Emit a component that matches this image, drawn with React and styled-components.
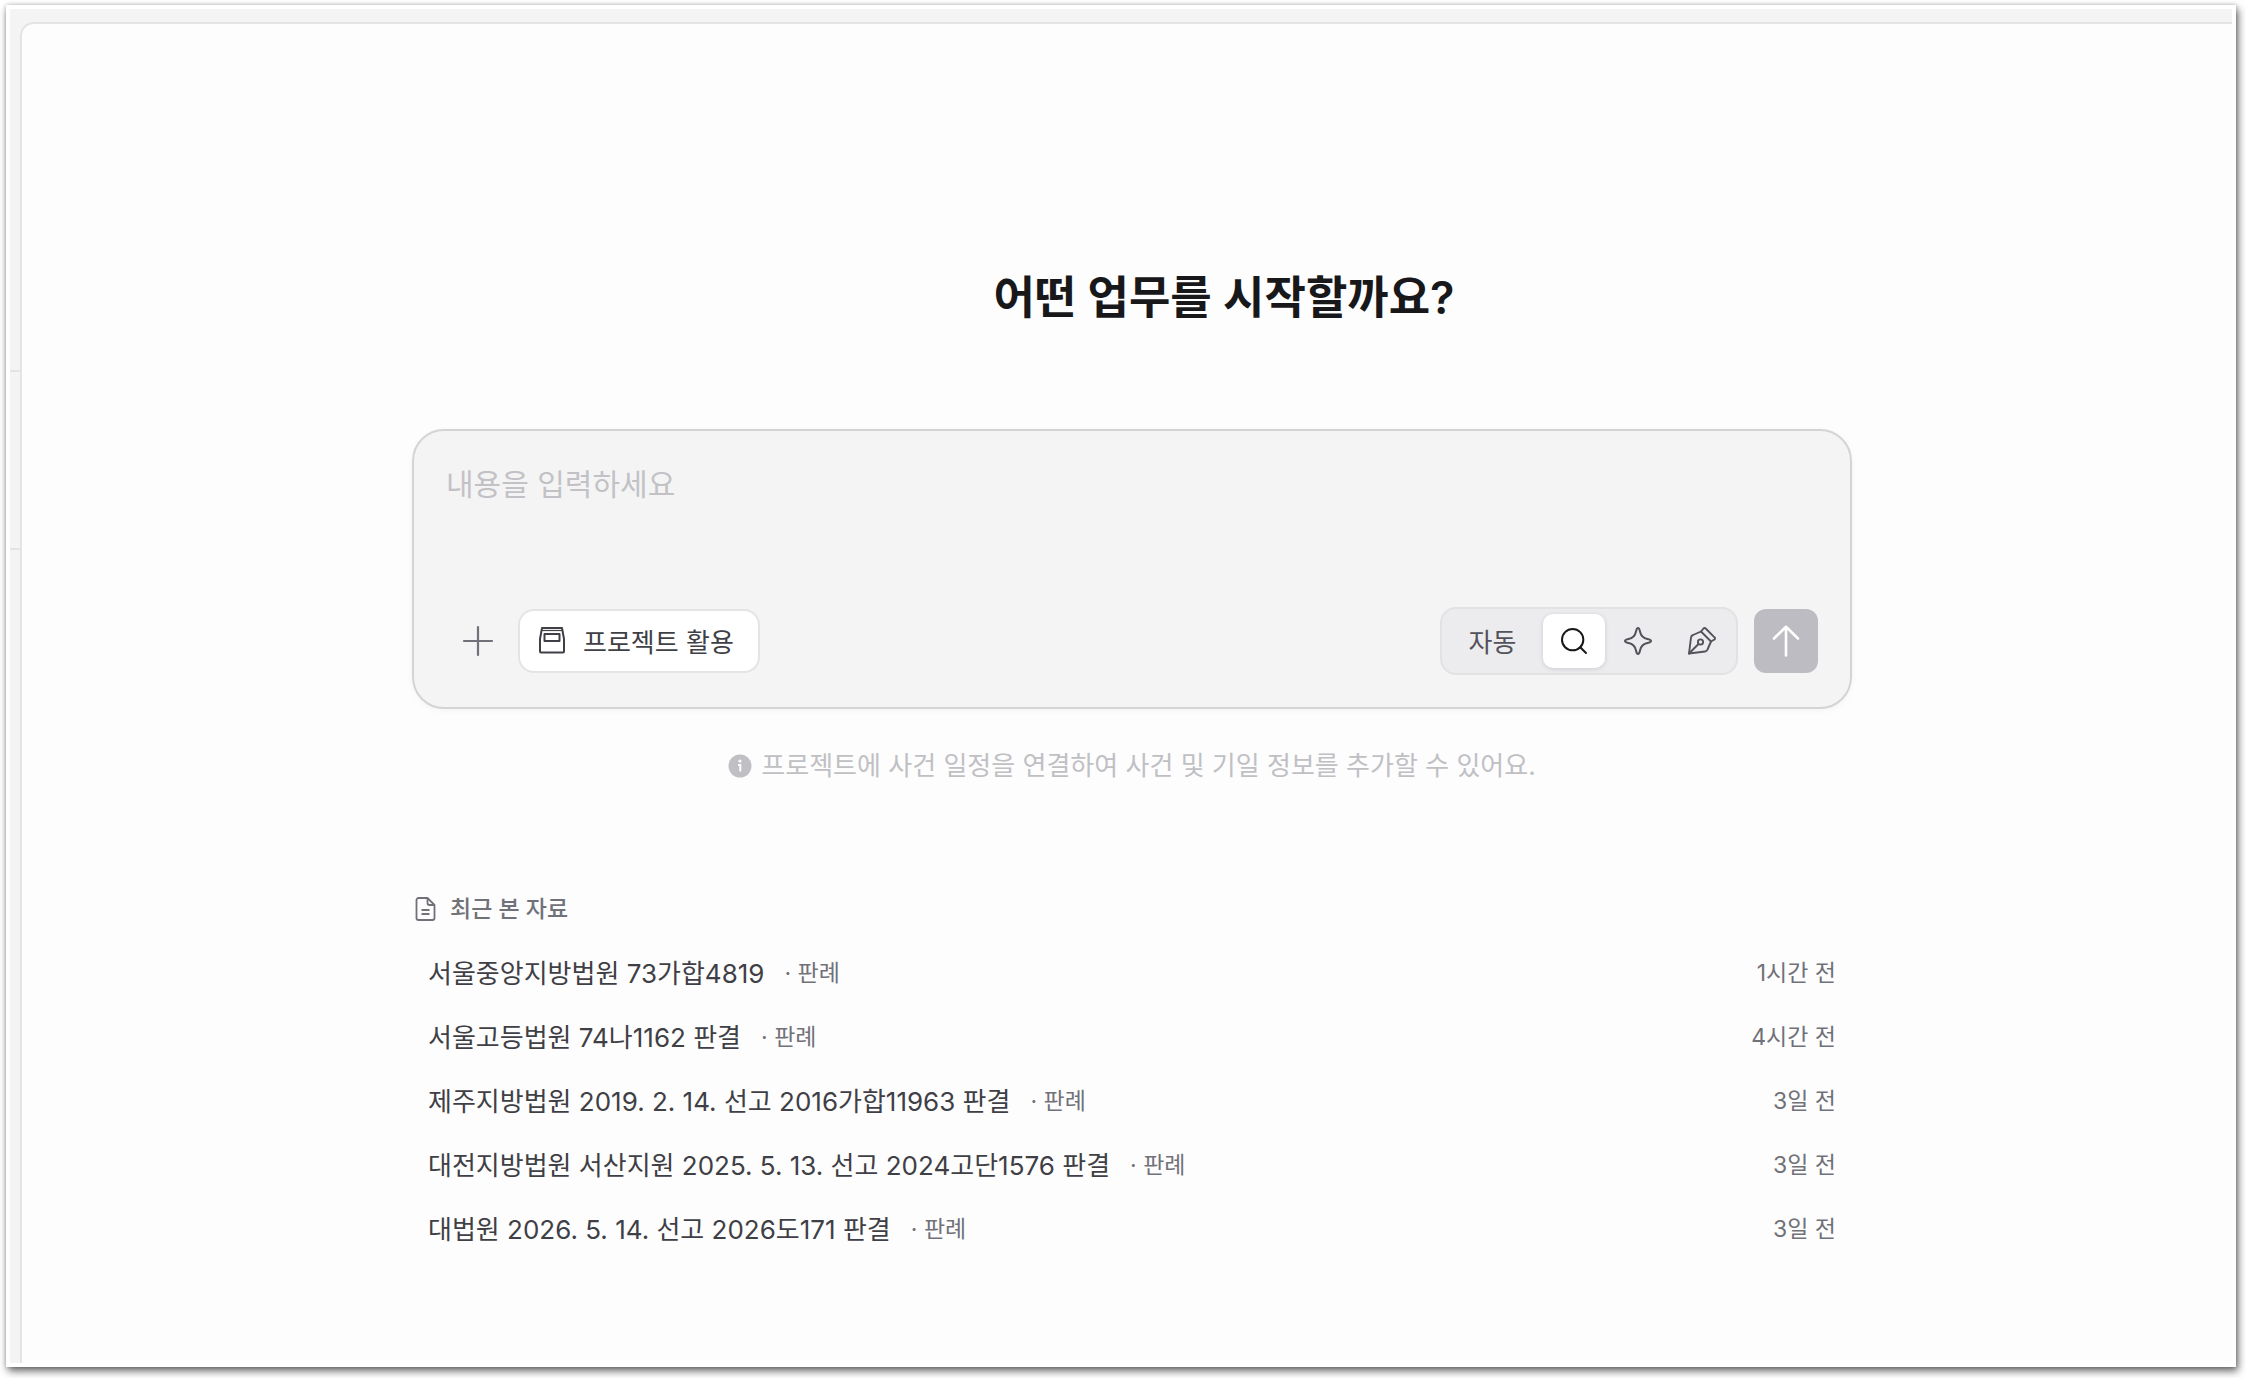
import React, { useState } from 'react';
import styled, { createGlobalStyle } from 'styled-components';
import { Search } from 'lucide-react';

const GlobalStyle = createGlobalStyle`
  * {
    box-sizing: border-box;
  }

  body {
    margin: 0;
    background: #fff;
    font-family: Inter, "Noto Sans CJK KR", sans-serif;
    color: #3f3f46;
  }

  button,
  textarea {
    font-family: inherit;
  }
`;

const Page = styled.div`
  display: flex;
  min-height: 100vh;
  padding: 5px 10px 11px 6px;
`;

const Window = styled.div`
  display: flex;
  flex: 1;
  padding: 4px;
  background: #fff;
  box-shadow: 2px 4px 8px rgba(0, 0, 0, 0.6), 0 0 4px rgba(0, 0, 0, 0.2);
`;

const Workspace = styled.div`
  display: flex;
  flex: 1;
  overflow: hidden;
  background: #f4f4f4;
`;

const Sidebar = styled.aside`
  width: 10px;
  flex-shrink: 0;
  padding-top: 361px;
`;

const SidebarSection = styled.div`
  height: 180px;
  border-top: 2px solid #e4e4e4;
  border-bottom: 2px solid #e4e4e4;
`;

const Panel = styled.main`
  flex: 1;
  margin: 13px -12px 0 0;
  padding: 244px 48px 96px;
  border: 2px solid #e4e4e4;
  border-bottom: none;
  border-radius: 14px 14px 0 0;
  background: #fdfdfd;
`;

const Content = styled.div`
  max-width: 1440px;
  margin: 0 auto;
`;

const Title = styled.h1`
  margin: 0 0 101px;
  padding-left: 184px;
  color: #18181b;
  font-size: 45px;
  font-weight: 600;
  line-height: 60px;
  text-align: center;
`;

const Composer = styled.form`
  padding: 32px;
  border: 2px solid #d4d4d6;
  border-radius: 32px;
  background: #f4f4f4;
  box-shadow: 0 2px 6px rgba(0, 0, 0, 0.04);
`;

const PromptInput = styled.textarea`
  display: block;
  width: 100%;
  height: 144px;
  padding: 0;
  border: none;
  outline: none;
  resize: none;
  background: transparent;
  color: #3f3f46;
  font-size: 30px;
  line-height: 42px;

  &::placeholder {
    color: #c2c2c6;
    opacity: 1;
  }
`;

const Toolbar = styled.div`
  display: flex;
  align-items: center;
  justify-content: space-between;
`;

const ToolGroup = styled.div`
  display: flex;
  align-items: center;
  gap: ${(props) => props.$gap}px;
`;

const IconButton = styled.button`
  display: flex;
  align-items: center;
  justify-content: center;
  width: 64px;
  height: 64px;
  padding: 0;
  border: none;
  border-radius: 12px;
  background: transparent;
  color: #71717a;
  cursor: pointer;
`;

const SendButton = styled(IconButton)`
  background: #bdbcc2;
  color: #fff;
`;

const ProjectButton = styled.button`
  display: flex;
  align-items: center;
  gap: 15px;
  height: 64px;
  padding: 0 24px 2px 16px;
  border: 2px solid #e4e4e6;
  border-radius: 16px;
  background: #fff;
  color: #3f3f46;
  font-size: 26px;
  cursor: pointer;
`;

const ModeGroup = styled.div`
  display: flex;
  align-items: center;
  gap: 2px;
  height: 68px;
  padding: 0 3px 0 4px;
  border: 2px solid #e2e2e5;
  border-radius: 16px;
  background: #ececee;
`;

const ModeButton = styled.button`
  display: flex;
  align-items: center;
  justify-content: center;
  width: ${(props) => (props.$wide ? 95 : 62)}px;
  height: 54px;
  padding: ${(props) => (props.$wide ? '0 2px 2px 0' : 0)};
  border: none;
  border-radius: 10px;
  background: ${(props) => (props.$active ? '#fff' : 'transparent')};
  box-shadow: ${(props) => (props.$active ? '0 1px 5px rgba(0, 0, 0, 0.14)' : 'none')};
  color: ${(props) => (props.$active ? '#18181b' : '#52525b')};
  font-size: 26px;
  cursor: pointer;
`;

const Hint = styled.p`
  display: flex;
  align-items: center;
  justify-content: center;
  gap: 9px;
  margin: 37px 0 105px;
  color: #c0c0c4;
  font-size: 26px;
  line-height: 40px;
`;

const RecentHeader = styled.h2`
  display: flex;
  align-items: center;
  gap: 12px;
  margin: 0 0 12px;
  color: #71717a;
  font-size: 23px;
  font-weight: 500;
  line-height: 36px;
`;

const RecentList = styled.ul`
  margin: 0;
  padding: 0;
  list-style: none;
`;

const RecentLink = styled.a`
  display: flex;
  align-items: center;
  height: 64px;
  padding: 0 16px;
  border-radius: 12px;
  color: #3f3f46;
  font-size: 26px;
  text-decoration: none;

  &:hover {
    background: #f4f4f4;
  }
`;

const Kind = styled.span`
  margin-left: 20px;
  color: #71717a;
  font-size: 23px;
`;

const Time = styled.time`
  margin-left: auto;
  color: #71717a;
  font-size: 23px;
`;

const PlusIcon = () => (
  <svg width="32" height="32" viewBox="0 0 32 32" fill="none" stroke="currentColor" strokeWidth="2.2" strokeLinecap="round">
    <path d="M16 2v28M2 16h28" />
  </svg>
);

const ProjectIcon = () => (
  <svg width="32" height="32" viewBox="0 0 32 32" fill="none" stroke="currentColor" strokeWidth="2" strokeLinejoin="round">
    <path d="M6 4h20l2 11v12.5a1 1 0 0 1-1 1H5a1 1 0 0 1-1-1V15z" />
    <path d="M6 6.5h20" strokeWidth="1.2" />
    <path d="M8.5 10v7h15v-7z" />
  </svg>
);

const SparkIcon = () => (
  <svg width="32" height="32" viewBox="0 0 32 32" fill="none" stroke="currentColor" strokeWidth="2" strokeLinejoin="round">
    <path d="M16 3c1 0 1.5 1 2 3.500.8 4.200 3.300 6.700 7.500 7.500 2.500.5 3.500 1 3.500 2s-1 1.500-3.500 2c-4.200.8-6.700 3.300-7.500 7.500-.5 2.500-1 3.500-2 3.500s-1.500-1-2-3.500c-.8-4.200-3.300-6.700-7.500-7.500C4 17.500 3 17 3 16s1-1.500 3.500-2c4.200-.8 6.700-3.300 7.500-7.500C14.500 4 15 3 16 3z" />
  </svg>
);

const PenIcon = () => (
  <svg width="32" height="32" viewBox="0 0 32 32" fill="none" stroke="currentColor" strokeWidth="1.9" strokeLinecap="round" strokeLinejoin="round">
    <path d="M3 28.500 5 12.500a3 3 0 0 1 2-2.500l8-3.500L25 16.500 21.500 24.500a3 3 0 0 1-2.500 2z" />
    <path d="M15 6.500 17.500 3.500a1.500 1.500 0 0 1 2.200 0l8.800 8.800a1.500 1.500 0 0 1 0 2.200L25 16.500" />
    <path d="M3 28.500 12.500 19" />
    <circle cx="14.500" cy="17" r="2.600" />
  </svg>
);

const SendIcon = () => (
  <svg width="32" height="32" viewBox="0 0 32 32" fill="none" stroke="currentColor" strokeWidth="2.6" strokeLinecap="round" strokeLinejoin="round">
    <path d="M16 30.5V2M4 13.500 16 1.800l12 11.700" />
  </svg>
);

const InfoIcon = () => (
  <svg width="24" height="24" viewBox="0 0 24 24">
    <circle cx="12" cy="12" r="11.5" fill="currentColor" />
    <circle cx="12" cy="7" r="1.6" fill="#fdfdfd" />
    <path d="M10 11h2.300v6.500" fill="none" stroke="#fdfdfd" strokeWidth="2" />
  </svg>
);

const DocumentIcon = () => (
  <svg width="26" height="26" viewBox="0 0 26 26" fill="none" stroke="currentColor" strokeWidth="1.8" strokeLinejoin="round">
    <path d="M15.500 2H6.500a2 2 0 0 0-2 2v18a2 2 0 0 0 2 2h14a2 2 0 0 0 2-2V9z" />
    <path d="M15.500 2v5a2 2 0 0 0 2 2h5M9.500 14h8M9.500 18h8" />
  </svg>
);

const modes = [
  { id: 'auto', label: '자동' },
  { id: 'search', label: '검색', icon: <Search size={32} strokeWidth={1.5} /> },
  { id: 'spark', label: '생성', icon: <SparkIcon /> },
  { id: 'write', label: '작성', icon: <PenIcon /> },
];

const recentItems = [
  { title: '서울중앙지방법원 73가합4819', kind: '판례', time: '1시간 전' },
  { title: '서울고등법원 74나1162 판결', kind: '판례', time: '4시간 전' },
  { title: '제주지방법원 2019. 2. 14. 선고 2016가합11963 판결', kind: '판례', time: '3일 전' },
  { title: '대전지방법원 서산지원 2025. 5. 13. 선고 2024고단1576 판결', kind: '판례', time: '3일 전' },
  { title: '대법원 2026. 5. 14. 선고 2026도171 판결', kind: '판례', time: '3일 전' },
];

const PromptComposer = () => {
  const [text, setText] = useState('');
  const [mode, setMode] = useState('search');

  const handleSubmit = (event) => {
    event.preventDefault();
    setText('');
  };

  return (
    <Composer onSubmit={handleSubmit}>
      <PromptInput
        aria-label="내용"
        placeholder="내용을 입력하세요"
        value={text}
        onChange={(event) => setText(event.target.value)}
      />
      <Toolbar>
        <ToolGroup $gap={8}>
          <IconButton type="button" aria-label="추가">
            <PlusIcon />
          </IconButton>
          <ProjectButton type="button">
            <ProjectIcon />
            프로젝트 활용
          </ProjectButton>
        </ToolGroup>
        <ToolGroup $gap={16}>
          <ModeGroup>
            {modes.map(({ id, label, icon }) => (
              <ModeButton
                key={id}
                type="button"
                aria-label={label}
                aria-pressed={mode === id}
                $active={mode === id}
                $wide={!icon}
                onClick={() => setMode(id)}
              >
                {icon || label}
              </ModeButton>
            ))}
          </ModeGroup>
          <SendButton type="submit" aria-label="보내기">
            <SendIcon />
          </SendButton>
        </ToolGroup>
      </Toolbar>
    </Composer>
  );
};

const App = () => (
  <>
    <GlobalStyle />
    <Page>
      <Window>
        <Workspace>
          <Sidebar>
            <SidebarSection />
          </Sidebar>
          <Panel>
            <Content>
              <Title>어떤 업무를 시작할까요?</Title>
              <PromptComposer />
              <Hint>
                <InfoIcon />
                프로젝트에 사건 일정을 연결하여 사건 및 기일 정보를 추가할 수 있어요.
              </Hint>
              <RecentHeader>
                <DocumentIcon />
                최근 본 자료
              </RecentHeader>
              <RecentList>
                {recentItems.map((item) => (
                  <li key={item.title}>
                    <RecentLink href="#">
                      {item.title}
                      <Kind>· {item.kind}</Kind>
                      <Time>{item.time}</Time>
                    </RecentLink>
                  </li>
                ))}
              </RecentList>
            </Content>
          </Panel>
        </Workspace>
      </Window>
    </Page>
  </>
);

export default App;
